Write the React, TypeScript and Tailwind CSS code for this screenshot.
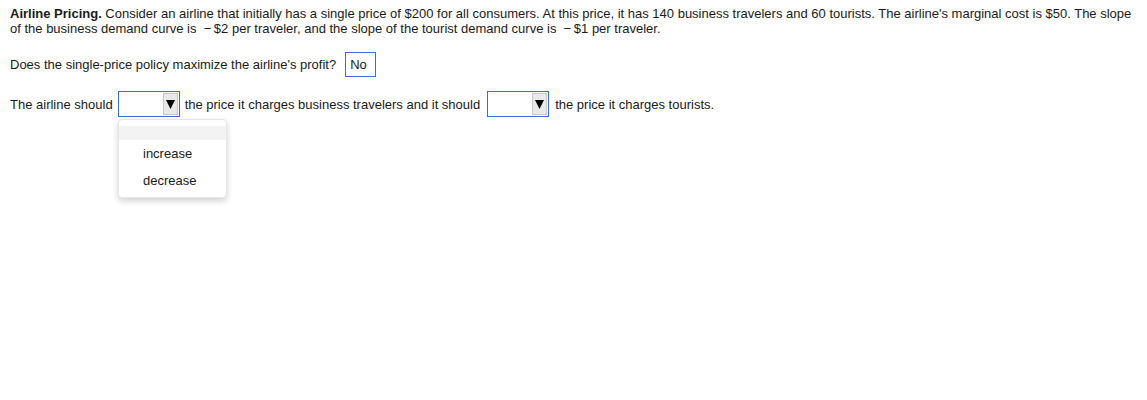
import React from "react";

function Dropdown() {
  return (
    <span className="inline-flex items-center justify-end w-[62px] h-[26px] border border-[#3a6fd8] bg-white align-middle mx-[5px] pr-[1px]">
      <span className="flex items-center justify-center w-[15px] h-[22px] bg-[#e9e9e9] border border-[#c8c8c8]">
        <svg width="9" height="10" viewBox="0 0 9 10">
          <path d="M0 1 L9 1 L4.5 10 Z" fill="#000" />
        </svg>
      </span>
    </span>
  );
}

export default function App() {
  return (
    <div className="bg-white w-[1147px] h-[400px] text-[13px] leading-[15px] text-[#1a1a1a] font-['Liberation_Sans',Arial,sans-serif] pl-[10px] pt-[6px] pr-[10px]">
      <p>
        <b>Airline Pricing.</b> Consider an airline that initially has a single price of $200 for all consumers. At this price, it has 140 business travelers and 60 tourists. The airline's marginal cost is $50. The slope of the business demand curve is &nbsp;−&#8201;$2 per traveler, and the slope of the tourist demand curve is &nbsp;−&#8201;$1 per traveler.
      </p>
      <div className="mt-[16px] flex items-center">
        <span>Does the single-price policy maximize the airline's profit?</span>
        <span className="ml-[9px] inline-flex items-center w-[31px] h-[25px] border border-[#3a6fd8] pl-[4px]">No</span>
      </div>
      <div className="mt-[14px] flex items-center relative">
        <span>The airline should</span>
        <Dropdown />
        <span>the price it charges business travelers and it should</span>
        <span className="ml-[2px]"><Dropdown /></span>
        <span className="ml-[1px]">the price it charges tourists.</span>
        <div className="absolute left-[108px] top-[28px] w-[109px] h-[79px] bg-white rounded-[4px] border border-[#e6e6e6] shadow-[0_3px_6px_rgba(0,0,0,0.18)] pt-[6px]">
          <div className="h-[14px] bg-[#f3f3f3]" />
          <div className="pl-[24px] pt-[6px] leading-[15px]">increase</div>
          <div className="pl-[24px] pt-[12px] leading-[15px]">decrease</div>
        </div>
      </div>
    </div>
  );
}
